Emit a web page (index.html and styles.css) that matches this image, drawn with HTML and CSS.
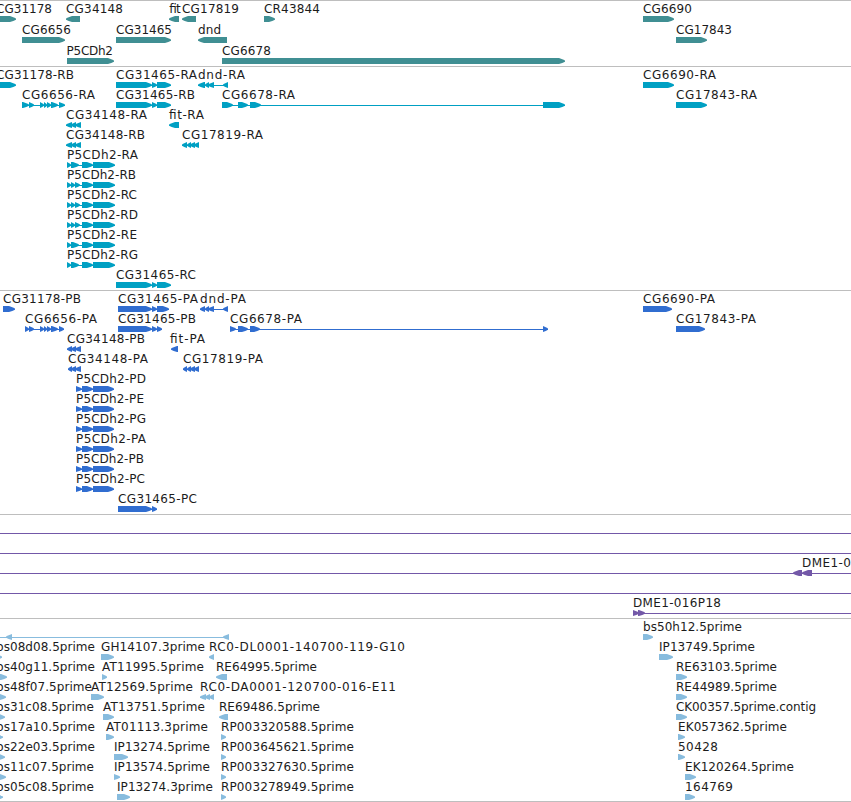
FILE: index.html
```
<!DOCTYPE html>
<html lang="en">
<head>
  <meta charset="UTF-8" />
  <meta name="viewport" content="width=device-width, initial-scale=1.0"/>
  <title>Genome browser</title>
  <link rel="stylesheet" href="styles.css">
</head>
<body>
  <div class="browser">
    <div class="track gene" id="gene"></div>
    <div class="track transcript" id="transcript"></div>
    <div class="track cds" id="cds"></div>
    <div class="track bac" id="bac"></div>
    <div class="track est" id="est"></div>
  </div>
  <script src="tracks.js"></script>
</body>
</html>
```

FILE: styles.css
```
body {
  margin: 0;
  background-color: #fff;
  overflow: hidden;
}

.browser {
  display: flex;
  flex-direction: column;
  width: 851px;
  border-bottom: 1px solid #bebebe;
}

.track {
  border-top: 1px solid #bebebe;
  overflow: hidden;
}

.track svg {
  display: block;
  width: 100%;
  height: 100%;
}

.track text {
  font-family: "DejaVu Sans", sans-serif;
  font-size: 12px;
  fill: #1c1c1c;
}

.gene {
  height: 65px;
  color: #408f93;
}

.transcript {
  height: 223px;
  color: #00a0c3;
}

.cds {
  height: 223px;
  color: #306dd0;
}

.bac {
  height: 103px;
  color: #7358a8;
}

.est {
  height: 182px;
  color: #88bcde;
}

.exon,
.intron {
  fill: currentColor;
}
```

FILE: tracks.js
```
// feature: [row, label, label start, label end, strand, exons]
const CG31465 = [[116, 152], [152, 157], [157, 171]];
const P5_SHORT = [[67, 71], [71, 79], [82, 93], [93, 115]];
const P5_LONG = [[67, 71], [71, 75], [75, 80], [82, 93], [93, 115]];
const P5_CDS = [[76, 82], [82, 93], [93, 114]];

const tracks = {
  gene: { step: 21, features: [
    [0, "CG31178", -4, 52, "+", [[-4, 16]]],
    [0, "CG34148", 66, 123, "-", [[66, 80]]],
    [0, "fit", 168.5, 180, "-", [[169, 179]]],
    [0, "CG17819", 182, 239, "-", [[182, 196]]],
    [0, "CR43844", 264, 320, "+", [[264, 275]]],
    [0, "CG6690", 643, 692, "+", [[643, 674]]],
    [1, "CG6656", 22, 71, "+", [[22, 65]]],
    [1, "CG31465", 116, 172, "+", [[116, 171]]],
    [1, "dnd", 198, 221, "-", [[198, 227]]],
    [1, "CG17843", 676, 732, "+", [[676, 707]]],
    [2, "P5CDh2", 66.5, 113, "+", [[67, 114]]],
    [2, "CG6678", 222, 271, "+", [[222, 565]]]
  ]},
  transcript: { step: 20, features: [
    [0, "CG31178-RB", -4, 74, "+", [[-4, 16]]],
    [0, "CG31465-RA", 116, 197, "+", CG31465],
    [0, "dnd-RA", 198, 245, "-", [[198, 205], [205, 209], [208, 214], [223, 228]]],
    [0, "CG6690-RA", 643, 716, "+", [[643, 674]]],
    [1, "CG6656-RA", 22, 95, "+", [[22, 29], [29, 34], [40, 44], [44, 47], [47, 51], [51, 58], [59, 65]]],
    [1, "CG31465-RB", 116, 195, "+", CG31465],
    [1, "CG6678-RA", 222, 295, "+", [[222, 233], [238, 248], [250, 261], [543, 565]]],
    [1, "CG17843-RA", 676, 757, "+", [[676, 707]]],
    [2, "CG34148-RA", 66, 147, "-", [[66, 72], [71, 76], [75, 81]]],
    [2, "fit-RA", 169, 204, "-", [[169, 179]]],
    [3, "CG34148-RB", 66, 145, "-", [[66, 72], [71, 76], [75, 81]]],
    [3, "CG17819-RA", 182, 263, "-", [[182, 187], [187, 191], [190, 195], [194, 199]]],
    [4, "P5CDh2-RA", 67, 138, "+", P5_SHORT],
    [5, "P5CDh2-RB", 67, 136, "+", P5_LONG],
    [6, "P5CDh2-RC", 67, 137, "+", P5_LONG],
    [7, "P5CDh2-RD", 67, 138, "+", P5_LONG],
    [8, "P5CDh2-RE", 67, 137, "+", P5_SHORT],
    [9, "P5CDh2-RG", 67, 138, "+", P5_SHORT],
    [10, "CG31465-RC", 116, 196, "+", CG31465]
  ]},
  cds: { step: 20, features: [
    [0, "CG31178-PB", 3, 81, "+", [[3, 15]]],
    [0, "CG31465-PA", 118, 198, "+", [[118, 152], [152, 157], [157, 169]]],
    [0, "dnd-PA", 200, 246, "-", [[200, 205], [205, 209], [208, 214], [223, 228]]],
    [0, "CG6690-PA", 643, 715, "+", [[643, 672]]],
    [1, "CG6656-PA", 25, 97, "+", [[25, 29], [29, 34], [40, 44], [44, 47], [47, 51], [51, 58], [59, 64]]],
    [1, "CG31465-PB", 118, 196, "+", [[118, 152], [152, 157], [157, 162]]],
    [1, "CG6678-PA", 230, 302, "+", [[230, 236], [238, 248], [250, 260], [543, 548]]],
    [1, "CG17843-PA", 676, 756, "+", [[676, 705]]],
    [2, "CG34148-PB", 67, 145, "-", [[67, 72], [71, 76], [75, 81]]],
    [2, "fit-PA", 170, 205, "-", [[171, 178]]],
    [3, "CG34148-PA", 68, 148, "-", [[68, 72], [71, 76], [75, 81]]],
    [3, "CG17819-PA", 183, 263, "-", [[183, 187], [187, 191], [190, 195], [194, 199]]],
    [4, "P5CDh2-PD", 76, 146, "+", P5_CDS],
    [5, "P5CDh2-PE", 76, 144, "+", P5_CDS],
    [6, "P5CDh2-PG", 76, 146, "+", P5_CDS],
    [7, "P5CDh2-PA", 76, 146, "+", P5_CDS],
    [8, "P5CDh2-PB", 76, 144, "+", P5_CDS],
    [9, "P5CDh2-PC", 76, 145, "+", P5_CDS],
    [10, "CG31465-PC", 118, 197, "+", [[118, 152], [152, 157]]]
  ]},
  bac: { step: 20, features: [
    [0, "", 0, 0, "+", [[-20, -10], [860, 870]]],
    [1, "", 0, 0, "+", [[-20, -10], [860, 870]]],
    [2, "DME1-0", 802, 851, "-", [[-20, -10], [793, 802], [802, 812], [860, 870]]],
    [3, "", 0, 0, "+", [[-20, -10], [860, 870]]],
    [4, "DME1-016P18", 633, 721, "+", [[633, 639], [638, 645], [860, 870]]]
  ]},
  est: { step: 20, features: [
    [0, "", 0, 0, "-", [[-20, -10], [6, 12], [223, 229]]],
    [0, "bs50h12.5prime", 643, 742, "+", [[643, 653]]],
    [1, "bs08d08.5prime", -4, 95, "+", [[-4, 2]]],
    [1, "GH14107.3prime", 101, 205, "+", [[101, 114]]],
    [1, "RC0-DL0001-140700-119-G10", 209, 405, "-", [[209, 214]]],
    [1, "IP13749.5prime", 659, 755, "+", [[659, 673]]],
    [2, "bs40g11.5prime", -4, 95, "+", [[-4, 7]]],
    [2, "AT11995.5prime", 102, 204, "+", [[102, 107]]],
    [2, "RE64995.5prime", 216, 317, "-", [[216, 227]]],
    [2, "RE63103.5prime", 676, 777, "+", [[676, 687]]],
    [3, "bs48f07.5prime", -4, 92, "+", [[-5, 6]]],
    [3, "AT12569.5prime", 91, 193, "+", [[91, 104]]],
    [3, "RC0-DA0001-120700-016-E11", 200, 396, "-", [[200, 206], [205, 210], [209, 214]]],
    [3, "RE44989.5prime", 676, 777, "+", [[676, 687]]],
    [4, "bs31c08.5prime", -4, 94, "+", [[-4, 5]]],
    [4, "AT13751.5prime", 103, 205, "+", [[103, 114]]],
    [4, "RE69486.5prime", 219, 320, "-", [[219, 228]]],
    [4, "CK00357.5prime.contig", 676, 816, "+", [[676, 687]]],
    [5, "bs17a10.5prime", -4, 95, "+", [[-4, 3]]],
    [5, "AT01113.3prime", 106, 208, "+", [[106, 114]]],
    [5, "RP003320588.5prime", 221, 354, "+", [[221, 226]]],
    [5, "EK057362.5prime", 678, 787, "+", [[678, 685]]],
    [6, "bs22e03.5prime", -4, 95, "+", [[-4, 5]]],
    [6, "IP13274.5prime", 114, 210, "+", [[114, 128]]],
    [6, "RP003645621.5prime", 221, 354, "+", [[221, 226]]],
    [6, "50428", 678, 718, "+", [[678, 685]]],
    [7, "bs11c07.5prime", -4, 94, "+", [[-4, 6]]],
    [7, "IP13574.5prime", 114, 210, "+", [[114, 120]]],
    [7, "RP003327630.5prime", 221, 354, "+", [[221, 226]]],
    [7, "EK120264.5prime", 685, 794, "+", [[685, 696]]],
    [8, "bs05c08.5prime", -4, 94, "+", [[-4, 3]]],
    [8, "IP13274.3prime", 117, 213, "+", [[117, 130]]],
    [8, "RP003278949.5prime", 221, 354, "+", [[221, 226]]],
    [8, "164769", 685, 733, "+", [[685, 695]]]
  ]}
};

// box with a rounded point on the side of the strand
function exon(start, end, y, strand) {
  const head = Math.min(6, end - start);
  const dir = strand === "+" ? 1 : -1;
  const back = strand === "+" ? start : end;
  const tip = strand === "+" ? end : start;
  const neck = tip - head * dir;
  const bend = tip - head * 0.45 * dir;
  const points = [
    [back, y], [neck, y], [bend, y + 1.2], [tip, y + 2.6], [tip, y + 3.8],
    [bend, y + 5], [neck, y + 6], [back, y + 6]
  ];
  return `<polygon class="exon" points="${points.join(" ")}"/>`;
}

Object.keys(tracks).forEach((id) => {
  const { step, features } = tracks[id];
  let out = "";
  features.forEach(([row, label, x, labelEnd, strand, exons]) => {
    const top = row * step;
    const first = exons[0][0];
    const last = exons[exons.length - 1][1];
    if (exons.length > 1) {
      out += `<rect class="intron" x="${first}" y="${top + 18}" width="${last - first}" height="1"/>`;
    }
    exons.forEach(([start, end]) => {
      out += exon(start, end, top + 15, strand);
    });
    if (label) {
      out += `<text x="${x}" y="${top + 12}" textLength="${labelEnd - x}">${label}</text>`;
    }
  });
  document.getElementById(id).innerHTML = `<svg>${out}</svg>`;
});
```
